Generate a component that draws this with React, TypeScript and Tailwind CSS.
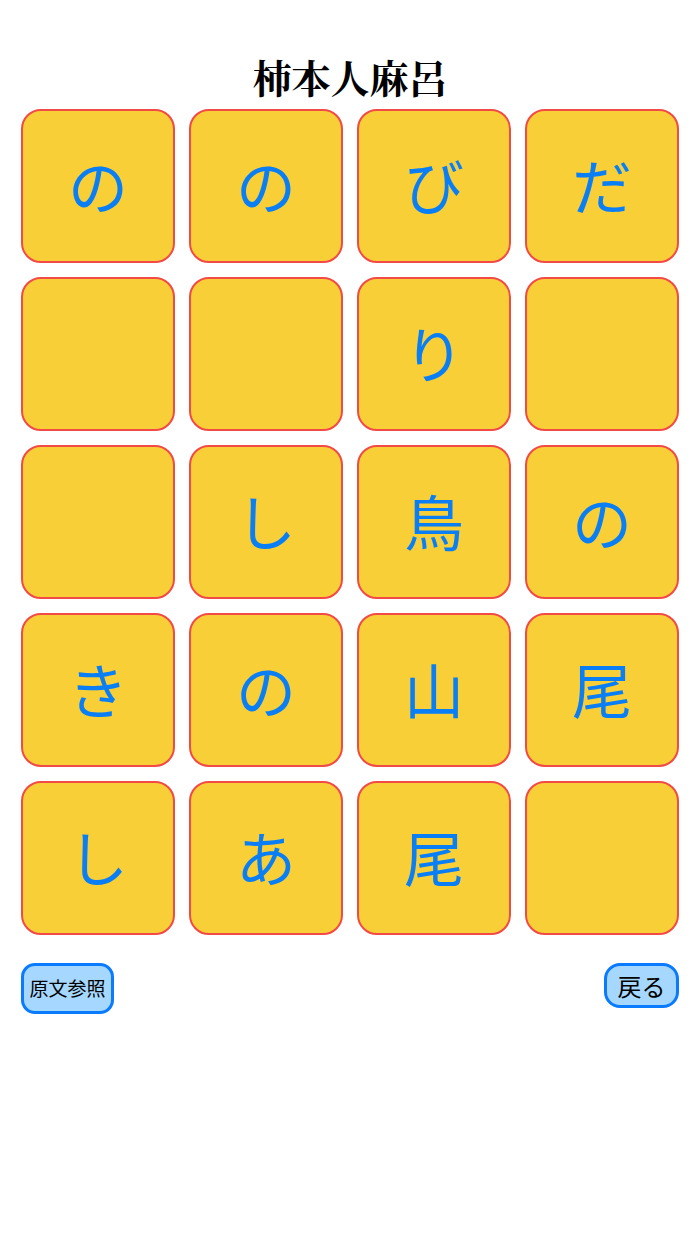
import React from 'react';

const tiles: string[] = [
  'の', 'の', 'び', 'だ',
  '', '', 'り', '',
  '', 'し', '鳥', 'の',
  'き', 'の', '山', '尾',
  'し', 'あ', '尾', '',
];

const jp = { fontFamily: '"Noto Sans CJK JP", "Noto Sans", sans-serif' };

const App: React.FC = () => {
  return (
    <div className="w-[700px] min-h-[1244px] bg-white px-[21px]" style={jp}>
      <h1
        className="h-[109px] pt-[53px] text-center text-[39px] leading-[46px] font-bold text-black"
        style={{ fontFamily: '"Noto Serif CJK JP", "Liberation Serif", "Noto Sans CJK JP", serif' }}
      >
        柿本人麻呂
      </h1>
      <div className="grid grid-cols-4 gap-[14px]">
        {tiles.map((ch, i) => (
          <div
            key={i}
            className="flex h-[154px] items-center justify-center rounded-[20px] border-2 border-[#f24a45] bg-[#f9cf38] pb-[4px] text-[60px] leading-none text-[#0a7ff5]"
          >
            {ch}
          </div>
        ))}
      </div>
      <div className="mt-[28px] flex items-start justify-between">
        <button className="flex h-[51px] w-[93px] items-center justify-center rounded-[14px] border-[3px] border-[#0a7aff] bg-[#a6d8ff] text-[19px] text-black">
          原文参照
        </button>
        <button className="flex h-[45px] w-[75px] items-center justify-center rounded-[16px] border-[3px] border-[#0a7aff] bg-[#a6d8ff] text-[24px] text-black">
          戻る
        </button>
      </div>
    </div>
  );
};

export default App;
